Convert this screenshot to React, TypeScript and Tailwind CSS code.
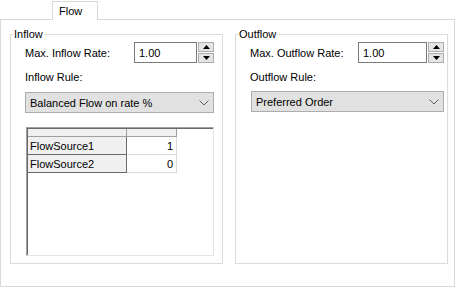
import React from "react";

function Spinner() {
  return (
    <div className="flex w-[16px] flex-col gap-px">
      <div className="flex h-[10px] items-center justify-center border border-[#adadad] bg-[#e5e5e5]">
        <svg width="7" height="4" viewBox="0 0 7 4"><path d="M0 4 L3.5 0 L7 4 Z" fill="#000" /></svg>
      </div>
      <div className="flex h-[10px] items-center justify-center border border-[#adadad] bg-[#e5e5e5]">
        <svg width="7" height="4" viewBox="0 0 7 4"><path d="M0 0 L3.5 4 L7 0 Z" fill="#000" /></svg>
      </div>
    </div>
  );
}

function NumField({ label, labelW, inputW }: { label: string; labelW: string; inputW: string }) {
  return (
    <div className="mt-px flex h-[21px] items-center pl-[14px]">
      <span className={labelW}>{label}</span>
      <div className={`flex h-[21px] items-center border border-[#7a7a7a] bg-white pl-[4px] ${inputW}`}>1.00</div>
      <div className="ml-px">
        <Spinner />
      </div>
    </div>
  );
}

function Combo({ text, className }: { text: string; className: string }) {
  return (
    <div className={`flex h-[21px] items-center justify-between border border-[#adadad] bg-[#e1e1e1] pl-[4px] pr-[4px] ${className}`}>
      <span>{text}</span>
      <svg width="10" height="6" viewBox="0 0 10 6">
        <path d="M0.5 0.5 L5 5 L9.5 0.5" fill="none" stroke="#606060" strokeWidth="1" />
      </svg>
    </div>
  );
}

const rows = [
  { name: "FlowSource1", value: 1 },
  { name: "FlowSource2", value: 0 },
];

function Grid() {
  return (
    <div className="ml-[15px] mt-[14px] h-[129px] w-[188px] border-b border-l border-r border-t border-b-[#e3e3e3] border-l-[#a0a0a0] border-r-[#e3e3e3] border-t-[#a0a0a0] bg-white">
      <div className="h-full border-l border-t border-[#696969]">
        <div className="grid grid-cols-[99px_50px]">
          <div className="h-[8px] border-b border-r border-[#a0a0a0] bg-[#f0f0f0]" />
          <div className="h-[8px] border-b border-r border-[#a0a0a0] bg-[#f0f0f0]" />
          {rows.map((r) => (
            <React.Fragment key={r.name}>
              <div className="flex h-[18px] items-center border-b border-r border-[#696969] bg-[#f0f0f0] pl-[2px]">{r.name}</div>
              <div className="flex h-[18px] items-center justify-end border-b border-r border-[#dadada] bg-white pr-[3px]">{r.value}</div>
            </React.Fragment>
          ))}
        </div>
      </div>
    </div>
  );
}

export default function App() {
  return (
    <div className="h-[288px] w-[455px] bg-white font-['Liberation_Sans',Arial,sans-serif] text-[11px] leading-[14px] text-black">
      <div className="flex h-[20px] items-end">
        <div className="h-full w-[52px] border-b border-[#d9d9d9]" />
        <div className="h-[19px] w-[46px] border-l border-r border-t border-[#d9d9d9] pl-[6px] pt-[2px]">Flow</div>
        <div className="h-full flex-1 border-b border-[#d9d9d9]" />
      </div>
      <div className="flex h-[267px] w-[455px] gap-[12px] border-b border-l border-r border-[#d9d9d9] pl-[9px] pt-[7px]">
        <fieldset className="h-[237px] w-[213px] border border-[#dcdcdc]">
          <legend className="ml-[2px] px-px">Inflow</legend>
          <NumField label="Max. Inflow Rate:" labelW="w-[109px]" inputW="w-[63px]" />
          <div className="mt-[7px] pl-[14px]">Inflow Rule:</div>
          <Combo text="Balanced Flow on rate %" className="ml-[14px] mt-[8px] w-[189px]" />
          <Grid />
        </fieldset>
        <fieldset className="h-[237px] w-[213px] border border-[#dcdcdc]">
          <legend className="ml-[2px] px-px">Outflow</legend>
          <NumField label="Max. Outflow Rate:" labelW="w-[108px]" inputW="w-[69px]" />
          <div className="mt-[7px] pl-[14px]">Outflow Rule:</div>
          <Combo text="Preferred Order" className="ml-[15px] mt-[7px] w-[193px]" />
        </fieldset>
      </div>
    </div>
  );
}
